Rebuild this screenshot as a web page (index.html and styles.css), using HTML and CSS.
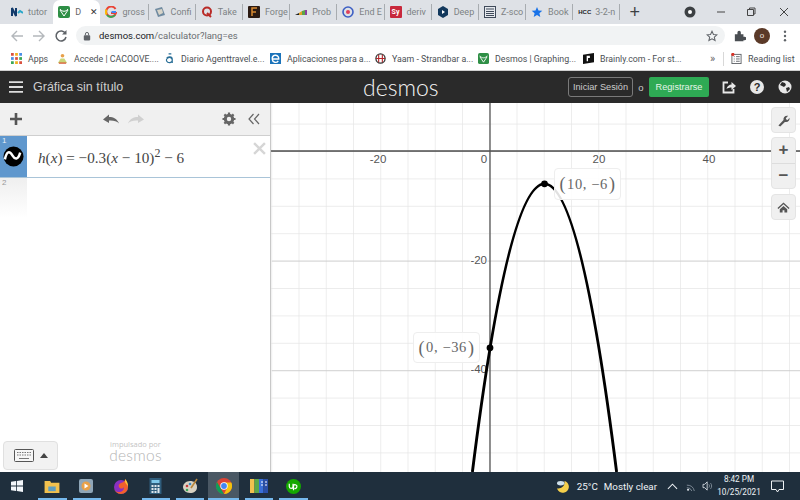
FILE: index.html
```html
<!DOCTYPE html>
<html lang="es">
<head>
<meta charset="utf-8">
<title>Desmos</title>
<link rel="stylesheet" href="styles.css">
</head>
<body>
<div class="tabs">
  <div class="tab"><svg class="ti" viewBox="0 0 12 12"><path d="M1 10V2l4 8V2" fill="none" stroke="#123a6b" stroke-width="2"/><path d="M7 7l2-2 3 2" fill="none" stroke="#2aa7c9" stroke-width="2"/></svg><span class="tt">tutor</span></div>
  <div class="tab active"><svg class="ti" viewBox="0 0 12 12"><rect width="12" height="12" rx="2" fill="#2f8f46"/><path d="M2 4l4 6 4-6M2 3c2 3 6 3 8 0" fill="none" stroke="#fff" stroke-width="1"/></svg><span class="tt">D</span><span class="tx">✕</span></div>
  <div class="tab nosep"><svg class="ti" viewBox="0 0 12 12"><path d="M10.500 3A5 5 0 1 0 11 7H6" fill="none" stroke="#ea4335" stroke-width="2"/><path d="M11 6H6.500" stroke="#4285f4" stroke-width="2"/><path d="M1.500 3.500a5 5 0 0 0 0 5" fill="none" stroke="#fbbc05" stroke-width="2"/><path d="M2 9a5 5 0 0 0 8 0" fill="none" stroke="#34a853" stroke-width="2"/></svg><span class="tt">gross</span></div>
  <div class="tab sep"><svg class="ti" viewBox="0 0 12 12"><path d="M1 3l7-2 3 8-7 2z" fill="#6f8aa0"/><path d="M3 4l5-1 1 4-4 2z" fill="#d8d4c8"/></svg><span class="tt">Confi</span></div>
  <div class="tab sep"><svg class="ti" viewBox="0 0 12 12"><circle cx="6" cy="5.500" r="4" fill="none" stroke="#b92b27" stroke-width="2"/><path d="M6 7l4 4" stroke="#b92b27" stroke-width="2"/></svg><span class="tt">Take</span></div>
  <div class="tab sep"><svg class="ti" viewBox="0 0 12 12"><rect width="12" height="12" rx="1" fill="#2b1a12"/><path d="M4 10V2h5M4 6h4" stroke="#d98a32" stroke-width="1.500" fill="none"/></svg><span class="tt">Forge</span></div>
  <div class="tab sep"><svg class="ti" viewBox="0 0 12 12"><path d="M0 9l4-2v2z" fill="#222"/><path d="M4 7l3-2v4H4z" fill="#e2a125"/><path d="M7 5l3-1v5H7z" fill="#5aa548"/><path d="M10 4h2v5h-2z" fill="#8a3fa0"/></svg><span class="tt">Prob</span></div>
  <div class="tab sep"><svg class="ti" viewBox="0 0 12 12"><circle cx="6" cy="6" r="5" fill="none" stroke="#3d5fc4" stroke-width="1.600"/><circle cx="6" cy="6" r="2" fill="#e0405a"/></svg><span class="tt">End E</span></div>
  <div class="tab sep"><span class="sy">Sy</span><span class="tt">deriv</span></div>
  <div class="tab sep"><svg class="ti" viewBox="0 0 12 12"><path d="M6 0l5 3v6l-5 3-5-3V3z" fill="#12385c"/><path d="M5 4l3 2-3 2z" fill="#fff"/></svg><span class="tt">Deep</span></div>
  <div class="tab sep"><svg class="ti" viewBox="0 0 12 12"><rect x=".5" y=".5" width="11" height="11" fill="#e6e9ee" stroke="#3f4a5a"/><path d="M2 3h8M2 5.500h8M2 7.500h8M2 9.500h8" stroke="#3f4a5a"/></svg><span class="tt">Z-sco</span></div>
  <div class="tab sep"><svg class="ti" viewBox="0 0 12 12"><path d="M6 1l1.500 3.500 3.800.3-2.900 2.500.9 3.700L6 8.900 2.700 11l.9-3.700L.7 4.800l3.800-.3z" fill="#1a73e8"/></svg><span class="tt">Book</span></div>
  <div class="tab sep"><span class="hcc">HCC</span><span class="tt">3-2-n</span></div>
  <div class="tab sep plus">+</div>
  <div class="win">
    <svg class="wi rec" viewBox="0 0 12 12"><circle cx="6" cy="6" r="5.500" fill="#3c4043"/><circle cx="6" cy="6" r="2" fill="#fff"/></svg>
    <svg class="wi" viewBox="0 0 12 12"><path d="M2 6h8" stroke="#444"/></svg>
    <svg class="wi" viewBox="0 0 12 12"><path d="M2.500 3.500h6v6h-6zM4.500 3.500v-1.500h5.500v6H8.500" fill="none" stroke="#444"/></svg>
    <svg class="wi wclose" viewBox="0 0 12 12"><path d="M2 2l8 8M10 2l-8 8" stroke="#444"/></svg>
  </div>
</div>

<div class="toolbar">
  <svg class="nav" viewBox="0 0 14 14"><path d="M13 7H2M7 2L2 7l5 5" fill="none" stroke="#b4b8bc" stroke-width="1.400"/></svg>
  <svg class="nav" viewBox="0 0 14 14"><path d="M1 7h11M7 2l5 5-5 5" fill="none" stroke="#b4b8bc" stroke-width="1.400"/></svg>
  <svg class="nav" viewBox="0 0 14 14"><path d="M11.500 4.500A5 5 0 1 0 12 8" fill="none" stroke="#5f6368" stroke-width="1.500"/><path d="M12.500 1v4.500H8z" fill="#5f6368"/></svg>
  <div class="omni">
    <svg class="lock" viewBox="0 0 10 12"><rect x="1" y="5" width="8" height="6.500" rx="1" fill="#5f6368"/><path d="M3 5V3.500a2 2 0 0 1 4 0V5" fill="none" stroke="#5f6368" stroke-width="1.200"/></svg>
    <span class="url"><b>desmos.com</b>/calculator?lang=es</span>
    <svg class="star" viewBox="0 0 14 14"><path d="M7 1.500l1.700 3.700 4 .4-3 2.700.9 4L7 10.300l-3.600 2 .9-4-3-2.700 4-.4z" fill="none" stroke="#5f6368" stroke-width="1.200"/></svg>
  </div>
  <svg class="ext" viewBox="0 0 14 14"><path d="M1 5h3V3a2 2 0 0 1 4 0v2h3v3h1.500a2 2 0 0 1 0 4H11v1H1z" fill="#4a4e52"/></svg>
  <span class="avatar">o</span>
  <svg class="dots" viewBox="0 0 4 14"><circle cx="2" cy="2" r="1.400" fill="#5f6368"/><circle cx="2" cy="7" r="1.400" fill="#5f6368"/><circle cx="2" cy="12" r="1.400" fill="#5f6368"/></svg>
</div>

<div class="bookmarks">
  <div class="bm bm1"><svg class="bi" viewBox="0 0 12 12"><g fill="#d9503f"><rect width="3" height="3"/><rect x="4.500" width="3" height="3" fill="#f2b01e"/><rect x="9" width="3" height="3" fill="#4a8ee8"/><rect y="4.500" width="3" height="3" fill="#4a8ee8"/><rect x="4.500" y="4.500" width="3" height="3"/><rect x="9" y="4.500" width="3" height="3" fill="#3aa757"/><rect y="9" width="3" height="3" fill="#3aa757"/><rect x="4.500" y="9" width="3" height="3" fill="#f2b01e"/><rect x="9" y="9" width="3" height="3"/></g></svg>Apps</div>
  <div class="bm bm2"><svg class="bi" viewBox="0 0 12 12"><circle cx="6" cy="3" r="2" fill="#e8a04a"/><path d="M1 11l3-5h4l3 5z" fill="#c9d67a"/><path d="M2 11h8" stroke="#d9603a" stroke-width="1.500"/></svg>Accede | CACOOVE....</div>
  <div class="bm bm3"><svg class="bi" viewBox="0 0 12 12"><path d="M3 5.500c1-2 6-2 6 1v4.500M9 7.500a3.200 2.800 0 1 0 0 .5M5 1h3" fill="none" stroke="#2a6f97" stroke-width="1.300"/></svg>Diario Agenttravel.e...</div>
  <div class="bm bm4"><svg class="bi" viewBox="0 0 12 12"><rect width="12" height="12" fill="#1b73ba"/><path d="M9.500 6.500h-7a3.500 3.500 0 0 1 7-1zM2.500 7a3.500 3.500 0 0 0 6.500 1.500" fill="none" stroke="#fff" stroke-width="1.500"/></svg>Aplicaciones para a...</div>
  <div class="bm bm5"><svg class="bi" viewBox="0 0 12 12"><circle cx="6" cy="6" r="5" fill="none" stroke="#333" stroke-width="1.400"/><path d="M1 6h10M4 2v8M8 2v8" stroke="#b3262a" stroke-width="1.200"/></svg>Yaam - Strandbar a...</div>
  <div class="bm bm6"><svg class="bi" viewBox="0 0 12 12"><rect width="12" height="12" rx="2" fill="#2f8f46"/><path d="M2 4l4 6 4-6M2 3c2 3 6 3 8 0" fill="none" stroke="#fff"/></svg>Desmos | Graphing...</div>
  <div class="bm bm7"><svg class="bi" viewBox="0 0 12 12"><path d="M0 2l12-2v10L0 12z" fill="#111"/><path d="M4 3h3.500v2.500H5.500V9H4z" fill="#fff"/></svg>Brainly.com - For st...</div>
  <div class="bm more">»</div>
  <div class="bm list"><svg class="bi" viewBox="0 0 12 12"><rect x="1" y="1.500" width="10" height="10" fill="none" stroke="#5f6368"/><path d="M3 4h1M3 6.500h1M3 9h1M5.500 4h4M5.500 6.500h4M5.500 9h4" stroke="#5f6368"/><circle cx="2" cy="1.500" r="1.700" fill="#d93025"/></svg>Reading list</div>
</div>

<header class="dheader">
  <svg class="burger" viewBox="0 0 14 12"><path d="M0 1.200h14M0 6h14M0 10.800h14" stroke="#ddd" stroke-width="1.800"/></svg>
  <span class="title">Gráfica sin título</span>
  <span class="logo">desmos</span>
  <span class="signin">Iniciar Sesión</span>
  <span class="or">o</span>
  <span class="signup">Registrarse</span>
  <svg class="hi share" viewBox="0 0 14 14"><path d="M6 2.500H1.500v10h10V9" fill="none" stroke="#e8e8e8" stroke-width="1.800"/><path d="M4.500 9c.5-3 3-4.500 5-4.500V2L14 6l-4.500 4V7.500C7.500 7.500 6 8 4.500 9z" fill="#e8e8e8"/></svg>
  <span class="hi help">?</span>
  <svg class="hi globe" viewBox="0 0 14 14"><circle cx="7" cy="7" r="6.500" fill="#e8e8e8"/><path d="M4 2l3 1 1 2-2 2-2-1-2-1zM8 8l3-1 1 2-3 3z" fill="#2a2a2a"/></svg>
</header>

<main class="app">
  <aside class="panel">
    <div class="ptools">
      <svg class="padd" viewBox="0 0 12 12"><path d="M6 0v12M0 6h12" stroke="#555" stroke-width="2.600"/></svg>
      <svg class="undo" viewBox="0 0 16 11"><path d="M0 5.500L6 .5V3c4.500 0 8 1.500 10 6.500-2.500-2.500-5-3.200-10-3V9z" fill="#666"/></svg>
      <svg class="redo" viewBox="0 0 16 11"><path d="M16 5.500L10 .5V3C5.500 3 2 4.500 0 9.500c2.500-2.500 5-3.200 10-3V9z" fill="#d0d0d0"/></svg>
      <svg class="gear" viewBox="0 0 14 14"><circle cx="7" cy="7" r="3.700" fill="none" stroke="#666" stroke-width="3"/><path d="M7 .5v13M.5 7h13M2.400 2.400l9.200 9.200M11.600 2.400l-9.200 9.200" stroke="#666" stroke-width="2.200" stroke-dasharray="2.200 8.600 2.200 0"/></svg>
      <svg class="collapse" viewBox="0 0 12 12"><path d="M5.500 1L1 6l4.500 5M11 1L6.500 6 11 11" fill="none" stroke="#666" stroke-width="1.200"/></svg>
    </div>
    <div class="expr">
      <div class="ecol"><span class="enum">1</span><svg class="eicon" viewBox="0 0 22 22"><circle cx="11" cy="11" r="10.500" fill="#000"/><path d="M2 14c2-9 5-9 8-4 3 5 6 4 8-3" fill="none" stroke="#fff" stroke-width="2.600"/></svg></div>
      <div class="math"><i>h</i>(<i>x</i>) = −0.3(<i>x</i> − 10)<sup>2</sup> − 6</div>
      <svg class="eclose" viewBox="0 0 12 12"><path d="M1 1l10 10M11 1L1 11" stroke="#d6d6d6" stroke-width="2.200"/></svg>
    </div>
    <div class="expr2"><div class="ecol2"><span class="enum2">2</span></div></div>
    <div class="pfoot">
      <div class="kbd"><svg class="kicon" viewBox="0 0 20 13"><rect x=".5" y=".5" width="19" height="12" rx="1" fill="#f6f6f6" stroke="#555"/><path d="M3 3.500h14M3 6h14" stroke="#777" stroke-dasharray="1.500 1"/><path d="M5 9.500h10" stroke="#777"/></svg><span class="kup"></span></div>
      <div class="powered"><span class="pw1">impulsado por</span><span class="pw2">desmos</span></div>
    </div>
  </aside>
  <section class="graph">
    <svg class="plot" viewBox="0 0 529 369">
      <defs>
        <pattern id="minor" patternUnits="userSpaceOnUse" x="0.250" y="20.600" width="27.250" height="27.400"><path d="M0 0H27.250M0 0V27.400" fill="none" stroke="#e6e6e6" stroke-width="1.400"/></pattern>
        <pattern id="major" patternUnits="userSpaceOnUse" x="0" y="48" width="109" height="109.600"><path d="M0 0H109M0 0V109.600" fill="none" stroke="#b8b8b8" stroke-width="1.200"/></pattern>
      </defs>
      <rect width="529" height="369" fill="#fff"/>
      <rect width="529" height="369" fill="url(#minor)"/>
      <rect width="529" height="369" fill="url(#major)" x="1"/>
      <path d="M0 48H529" stroke="#4e4e4e" stroke-width="1.300"/>
      <path d="M219 0V369" stroke="#555" stroke-width="1.300"/>
      <g class="ticks">
        <text x="107" y="60" text-anchor="middle">-20</text>
        <text x="213" y="60" text-anchor="middle">0</text>
        <text x="328" y="60" text-anchor="middle">20</text>
        <text x="438" y="60" text-anchor="middle">40</text>
        <text x="216" y="161" text-anchor="end">-20</text>
        <text x="216" y="270" text-anchor="end">-40</text>
      </g>
      <path d="M201.400 369Q273.500 -207.200 345.600 369" fill="none" stroke="#000" stroke-width="2.900"/>
      <circle cx="273.500" cy="80.800" r="3.400" fill="#000"/>
      <circle cx="219" cy="244.800" r="3.400" fill="#000"/>
    </svg>
    <div class="plabel pl1"><span class="pb">(</span>10, −6<span class="pb">)</span></div>
    <div class="plabel pl2"><span class="pb">(</span>0, −36<span class="pb">)</span></div>
    <div class="gtools">
      <div class="gbtn"><svg class="gi" viewBox="0 0 14 14"><path d="M1.500 12.500L7 6.500C6.500 4 8.500 1.500 12 2L9.500 4.500l.5 1.500 1.500.5L13.500 4c.5 3-2 5.500-5 4.500l-5 5z" fill="#555"/></svg></div>
      <div class="gzoom"><span class="gz">+</span><span class="gz gzb">−</span></div>
      <div class="gbtn"><svg class="gi" viewBox="0 0 14 14"><path d="M7 1.500L.5 7.500l1 1L7 3.500l5.500 5 1-1z" fill="#555"/><path d="M3 9l4-3.700L11 9v3.500H8V10H6v2.500H3z" fill="#555"/></svg></div>
    </div>
  </section>
</main>

<footer class="taskbar">
  <svg class="tb t1" viewBox="0 0 12 12"><path d="M0 1.800L5 1v4.600H0zM5.800.9L12 0v5.600H5.800zM0 6.400h5V11l-5-.8zM5.800 6.400H12V12l-6.200-.9z" fill="#f2f6fa"/></svg>
  <svg class="tb t2" viewBox="0 0 16 14"><path d="M0 1h6l1 2h9v11H0z" fill="#f2c14e"/><rect x="4" y="7" width="8" height="5" fill="#5f9ec0"/></svg>
  <svg class="tb t3" viewBox="0 0 14 14"><rect width="14" height="14" rx="2" fill="#8fa6b8"/><circle cx="7" cy="7" r="4.500" fill="#e8a048"/><path d="M5.500 4.500l4 2.500-4 2.500z" fill="#fff"/></svg>
  <svg class="tb t4" viewBox="0 0 16 16"><circle cx="8" cy="9" r="7" fill="#8a2fc0"/><path d="M1 9a7 7 0 0 0 14 0c0-4-2-6-3-8 0 3-2 3-4 4S5 7 6 9 10 11 11 9c0 3-2 5-5 5S1 12 1 9z" fill="#f2602c"/><path d="M12 1c2 2 3 4 3 8-1-3-2-3-3-5z" fill="#ffc03a"/></svg>
  <svg class="tb t5" viewBox="0 0 12 16"><rect width="12" height="16" fill="#2f5d7c"/><rect x="2" y="2" width="8" height="3" fill="#7fc8ea"/><path d="M2 7h2v2H2zM5 7h2v2H5zM8 7h2v2H8zM2 10h2v2H2zM5 10h2v2H5zM8 10h2v5H8zM2 13h2v2H2zM5 13h2v2H5z" fill="#dfe7ec"/></svg>
  <svg class="tb t6" viewBox="0 0 16 16"><path d="M8 3c4 0 7 2 7 6s-3 6-7 6-7-3-7-6 3-6 7-6z" fill="#d9d2c2"/><circle cx="5" cy="8" r="1.300" fill="#c43a3a"/><circle cx="8" cy="6" r="1.300" fill="#3a8ac4"/><circle cx="5" cy="12" r="1.300" fill="#3aa757"/><path d="M9 10l6-9" stroke="#b8863a" stroke-width="1.600"/></svg>
  <div class="tactive"><svg class="tb t7" viewBox="0 0 16 16"><circle cx="8" cy="8" r="8" fill="#db4437"/><path d="M8 4.500h7.300A8 8 0 0 1 8 16l3-6z" fill="#f4c20d"/><path d="M1 4l4 7 3 5A8 8 0 0 1 1 4z" fill="#0f9d58"/><circle cx="8" cy="8" r="3.700" fill="#fff"/><circle cx="8" cy="8" r="2.900" fill="#4285f4"/></svg></div>
  <svg class="tb t8" viewBox="0 0 18 14"><rect width="4.500" height="14" y="0" fill="#f2c14e"/><rect x="4.500" width="4.500" height="14" fill="#5ba84a"/><rect x="9" width="4.500" height="14" fill="#3a6fd8"/><rect x="13.500" width="4.500" height="14" fill="#2a4fa8"/><path d="M11 3h2M11 6h2M15 3h2M15 6h2" stroke="#fff"/></svg>
  <svg class="tb t9" viewBox="0 0 16 16"><circle cx="8" cy="8" r="8" fill="#14a800"/><path d="M3.500 5v3a2 2 0 0 0 4 0V5M8 12V7a2 2 0 1 1 1 3" fill="none" stroke="#fff" stroke-width="1.300"/></svg>
  <div class="ul ul1"></div><div class="ul ul2"></div><div class="ul ul3"></div><div class="ul ul4"></div><div class="ul ul5"></div><div class="ul ul6"></div><div class="ul ul7"></div>
  <div class="tray">
    <svg class="moon" viewBox="0 0 16 14"><path d="M9 1a6.500 6.500 0 1 1-8 8c4 1 9-2 8-8z" fill="#f5cf4b"/><ellipse cx="5" cy="3.500" rx="4" ry="2.300" fill="#cfe0ea"/></svg>
    <span class="temp">25°C</span>
    <span class="wx">Mostly clear</span>
    <svg class="chev" viewBox="0 0 12 7"><path d="M1 6l5-5 5 5" fill="none" stroke="#eef2f5" stroke-width="1.100"/></svg>
    <svg class="wifi" viewBox="0 0 12 12"><path d="M1 5a9 9 0 0 1 9 7M1 8a6 6 0 0 1 6 4" fill="none" stroke="#8b98a3"/><circle cx="2.500" cy="10.500" r="1.300" fill="#dfe5ea"/></svg>
    <svg class="vol" viewBox="0 0 14 12"><path d="M1 4h2l3-3v10L3 8H1z" fill="none" stroke="#dfe5ea"/><path d="M8 4c1 1 1 3 0 4M10 2.500c1.800 2 1.800 5 0 7" fill="none" stroke="#8b98a3"/></svg>
    <div class="clock"><span>8:42 PM</span><span>10/25/2021</span></div>
    <svg class="notif" viewBox="0 0 13 13"><path d="M.5 1h12v8.500H8L6.500 12 5 9.500H.5z" fill="none" stroke="#eef2f5"/></svg>
  </div>
</footer>
</body>
</html>
```

FILE: styles.css
```css
* { box-sizing: border-box; }
html, body { margin: 0; padding: 0; }
body { width: 800px; height: 500px; overflow: hidden; display: flex; flex-direction: column; font-family: "Liberation Sans", Arial, sans-serif; background: #fff; }

.tabs { height: 24px; flex: none; display: flex; align-items: center; background: #dee1e6; padding-left: 6px; }
.tab { width: 47.200px; height: 24px; flex: none; display: flex; align-items: center; padding-left: 5px; gap: 5px; font-family: Roboto, sans-serif; font-size: 9px; color: #7d8184; white-space: nowrap; }
.tab.sep { border-left: 1px solid #a8acb0; height: 16px; }
.tab.active { background: #fff; border-radius: 7px 7px 0 0; color: #666; }
.ti { width: 12px; height: 12px; flex: none; }
.tt { display: block; }
.active .tt { width: 12px; }
.tx { font-size: 9px; color: #333; margin-left: -2px; }
.sy { width: 12px; height: 12px; flex: none; background: #c8283c; color: #fff; font-size: 7px; font-weight: 700; line-height: 12px; text-align: center; border-radius: 1px; }
.hcc { font-size: 6px; font-weight: 700; color: #222; width: 12px; flex: none; font-family: "Liberation Sans", sans-serif; }
.plus { font-size: 18px; color: #3c4043; padding-left: 9px; font-family: "Liberation Sans", sans-serif; }
.win { display: flex; margin-left: auto; align-items: center; gap: 18px; padding-right: 10px; }
.wi { width: 12px; height: 12px; display: block; }
.rec { margin-right: 1px; }
.wclose { margin-left: 3px; }

.toolbar { height: 23px; flex: none; background: #fff; display: flex; align-items: center; padding-left: 10px; }
.nav { width: 14px; height: 14px; margin-right: 8px; flex: none; }
.omni { width: 649px; height: 19px; border-radius: 10px; background: #f1f3f4; display: flex; align-items: center; padding-left: 7px; flex: none; }
.lock { width: 8px; height: 10px; flex: none; }
.url { margin-left: 8px; font-family: Roboto, sans-serif; font-size: 9.500px; color: #6a6e72; }
.url b { font-weight: 400; color: #202124; }
.star { width: 12px; height: 12px; margin-left: auto; margin-right: 7px; }
.ext { width: 12px; height: 12px; margin-left: 9px; flex: none; }
.avatar { width: 16px; height: 16px; border-radius: 50%; background: #5b3a28; color: #f2e8e0; font-size: 8px; display: flex; align-items: center; justify-content: center; margin-left: 8px; flex: none; }
.dots { width: 4px; height: 12px; margin-left: 13px; flex: none; }

.bookmarks { height: 24px; flex: none; display: flex; align-items: center; font-family: Roboto, sans-serif; font-size: 8.800px; color: #4c5054; border-bottom: 1px solid #d0d0d0; background: #fff; padding-left: 11px; }
.bm { display: flex; align-items: center; gap: 6px; white-space: nowrap; flex: none; }
.bi { width: 11px; height: 11px; flex: none; }
.bm1 { width: 46px; }
.bm2 { width: 107px; }
.bm3 { width: 106px; }
.bm4 { width: 105px; }
.bm5 { width: 103px; }
.bm6 { width: 105px; }
.bm7 { width: 127px; }
.more { color: #666; font-size: 11px; border-right: 1px solid #d8d8d8; height: 14px; width: 14px; }
.list { margin-left: 7px; font-size: 9px; }

.dheader { height: 32px; flex: none; background: #2a2a2a; display: flex; align-items: center; position: relative; color: #ddd; }
.burger { width: 14px; height: 12px; margin-left: 9px; flex: none; }
.title { margin-left: 10px; font-size: 12.500px; color: #cfcfcf; }
.logo { position: absolute; left: 363px; top: 2px; font-family: Lato, sans-serif; font-weight: 300; font-size: 23px; color: #f4f4f4; }
.signin { margin-left: auto; width: 65px; height: 20px; border: 1px solid #7a7a7a; border-radius: 3px; font-size: 9.200px; color: #ccc; display: flex; align-items: center; justify-content: center; white-space: nowrap; }
.or { width: 16px; text-align: center; font-size: 9.500px; color: #ccc; }
.signup { width: 60px; height: 20px; background: #2eaa54; border-radius: 2px; font-size: 9.200px; color: #e4f4e8; display: flex; align-items: center; justify-content: center; }
.hi { width: 14px; height: 14px; flex: none; }
.share { margin-left: 13px; }
.help { margin-left: 14px; border-radius: 50%; background: #e8e8e8; color: #2a2a2a; font-size: 11px; font-weight: 700; display: flex; align-items: center; justify-content: center; }
.globe { margin-left: 14px; margin-right: 8px; }

.app { flex: 1; display: flex; min-height: 0; }
.panel { width: 271px; flex: none; display: flex; flex-direction: column; background: #fff; border-right: 1px solid #c8c8c8; }
.ptools { height: 33px; flex: none; background: #f0f0f0; border-bottom: 1px solid #cfcfcf; display: flex; align-items: center; padding-left: 10px; }
.padd { width: 12px; height: 12px; flex: none; }
.undo { width: 16px; height: 11px; margin-left: 81px; }
.redo { width: 16px; height: 11px; margin-left: 9px; }
.gear { width: 14px; height: 14px; margin-left: 78px; }
.collapse { width: 12px; height: 12px; margin-left: 12px; }
.expr { height: 42px; flex: none; display: flex; align-items: center; position: relative; border-bottom: 1px solid #a9c4d8; }
.ecol { width: 27px; height: 100%; background: #5f97cd; position: relative; flex: none; display: flex; align-items: center; justify-content: center; }
.enum { position: absolute; left: 2px; top: 0; font-size: 8px; color: #e8f0f8; }
.eicon { width: 21px; height: 21px; }
.math { margin-left: 11px; font-family: "Liberation Serif", serif; font-size: 15.200px; color: #444; white-space: nowrap; margin-top: 3px; }
.math sup { font-size: 12px; line-height: 0; vertical-align: 6px; }
.eclose { position: absolute; right: 4px; top: 6px; width: 13px; height: 13px; }
.expr2 { height: 40px; flex: none; }
.ecol2 { width: 27px; height: 100%; background: linear-gradient(#efefef, #fff); position: relative; }
.enum2 { position: absolute; left: 2px; top: 0; font-size: 8px; color: #999; }
.pfoot { flex: 1; display: flex; align-items: flex-end; padding: 0 0 2px 3px; }
.kbd { width: 55px; height: 29px; border: 1px solid #e0e0e0; border-radius: 4px; background: #f2f2f2; display: flex; align-items: center; padding-left: 10px; }
.kicon { width: 20px; height: 13px; }
.kup { width: 0; height: 0; border-left: 4px solid transparent; border-right: 4px solid transparent; border-bottom: 5px solid #444; margin-left: 6px; }
.powered { margin-left: 50px; margin-bottom: 9px; display: flex; flex-direction: column; align-items: center; width: 55px; color: #c4c4c4; }
.pw1 { font-size: 7.500px; line-height: 9px; font-family: "Open Sans", sans-serif; white-space: nowrap; }
.pw2 { font-family: Lato, sans-serif; font-weight: 300; font-size: 15.500px; line-height: 12px; letter-spacing: .3px; color: #b4b4b4; }

.graph { flex: 1; position: relative; min-width: 0; overflow: hidden; }
.plot { display: block; width: 529px; height: 369px; }
.ticks text { font-family: "Liberation Sans", sans-serif; font-size: 11.500px; fill: #555; paint-order: stroke; stroke: #fff; stroke-width: 2px; }
.plabel { position: absolute; background: rgba(255,255,255,.88); border: 1px solid #eee; border-radius: 4px; font-family: "Liberation Serif", serif; font-size: 14.500px; color: #666; letter-spacing: .6px; display: flex; align-items: center; justify-content: center; width: 67px; white-space: nowrap; }
.pb { font-size: 18px; line-height: 1; margin: 0 1px; }
.pl1 { left: 283px; top: 65px; height: 32px; }
.pl2 { left: 142px; top: 229px; height: 31px; }
.gtools { position: absolute; right: 4px; top: 4px; width: 25px; display: flex; flex-direction: column; gap: 4px; }
.gbtn { height: 26px; background: #f0f0f0; border: 1px solid #e4e4e4; border-radius: 4px; display: flex; align-items: center; justify-content: center; }
.gi { width: 13px; height: 13px; }
.gzoom { height: 52px; background: #f0f0f0; border: 1px solid #e4e4e4; border-radius: 4px; display: flex; flex-direction: column; margin-bottom: 1px; }
.gz { flex: 1; display: flex; align-items: center; justify-content: center; font-size: 17px; font-weight: 700; color: #555; }
.gzb { border-top: 1px solid #ddd; }

.taskbar { height: 28px; flex: none; background: #1f2f3d; display: flex; align-items: center; position: relative; color: #eef2f5; }
.tb { flex: none; display: block; }
.t1 { width: 12px; height: 12px; margin-left: 11px; }
.t2 { width: 16px; height: 13px; margin-left: 21px; }
.t3 { width: 14px; height: 14px; margin-left: 19px; }
.t4 { width: 16px; height: 16px; margin-left: 20px; }
.t5 { width: 13px; height: 16px; margin-left: 20px; }
.t6 { width: 16px; height: 16px; margin-left: 20px; }
.tactive { width: 31px; height: 28px; margin-left: 10px; background: #4a5864; display: flex; align-items: center; justify-content: center; flex: none; }
.t7 { width: 16px; height: 16px; }
.t8 { width: 18px; height: 14px; margin-left: 11px; }
.t9 { width: 15px; height: 15px; margin-left: 18px; }
.ul { position: absolute; bottom: 0; height: 2px; background: #76b9ed; }
.ul1 { left: 38px; width: 29px; }
.ul2 { left: 73px; width: 28px; }
.ul3 { left: 142px; width: 28px; }
.ul4 { left: 176px; width: 28px; }
.ul5 { left: 208px; width: 31px; }
.ul6 { left: 245px; width: 28px; }
.ul7 { left: 279px; width: 29px; }
.tray { margin-left: auto; display: flex; align-items: center; font-family: Roboto, sans-serif; font-size: 9.800px; }
.moon { width: 15px; height: 13px; }
.temp { margin-left: 6px; }
.wx { margin-left: 6px; }
.chev { width: 11px; height: 7px; margin-left: 10px; }
.wifi { width: 10px; height: 10px; margin-left: 8px; }
.vol { width: 12px; height: 10px; margin-left: 6px; }
.clock { width: 46px; margin-left: 2px; display: flex; flex-direction: column; align-items: center; font-size: 8.200px; line-height: 13px; white-space: nowrap; }
.notif { width: 13px; height: 13px; margin-left: 9px; margin-right: 16px; }
```
